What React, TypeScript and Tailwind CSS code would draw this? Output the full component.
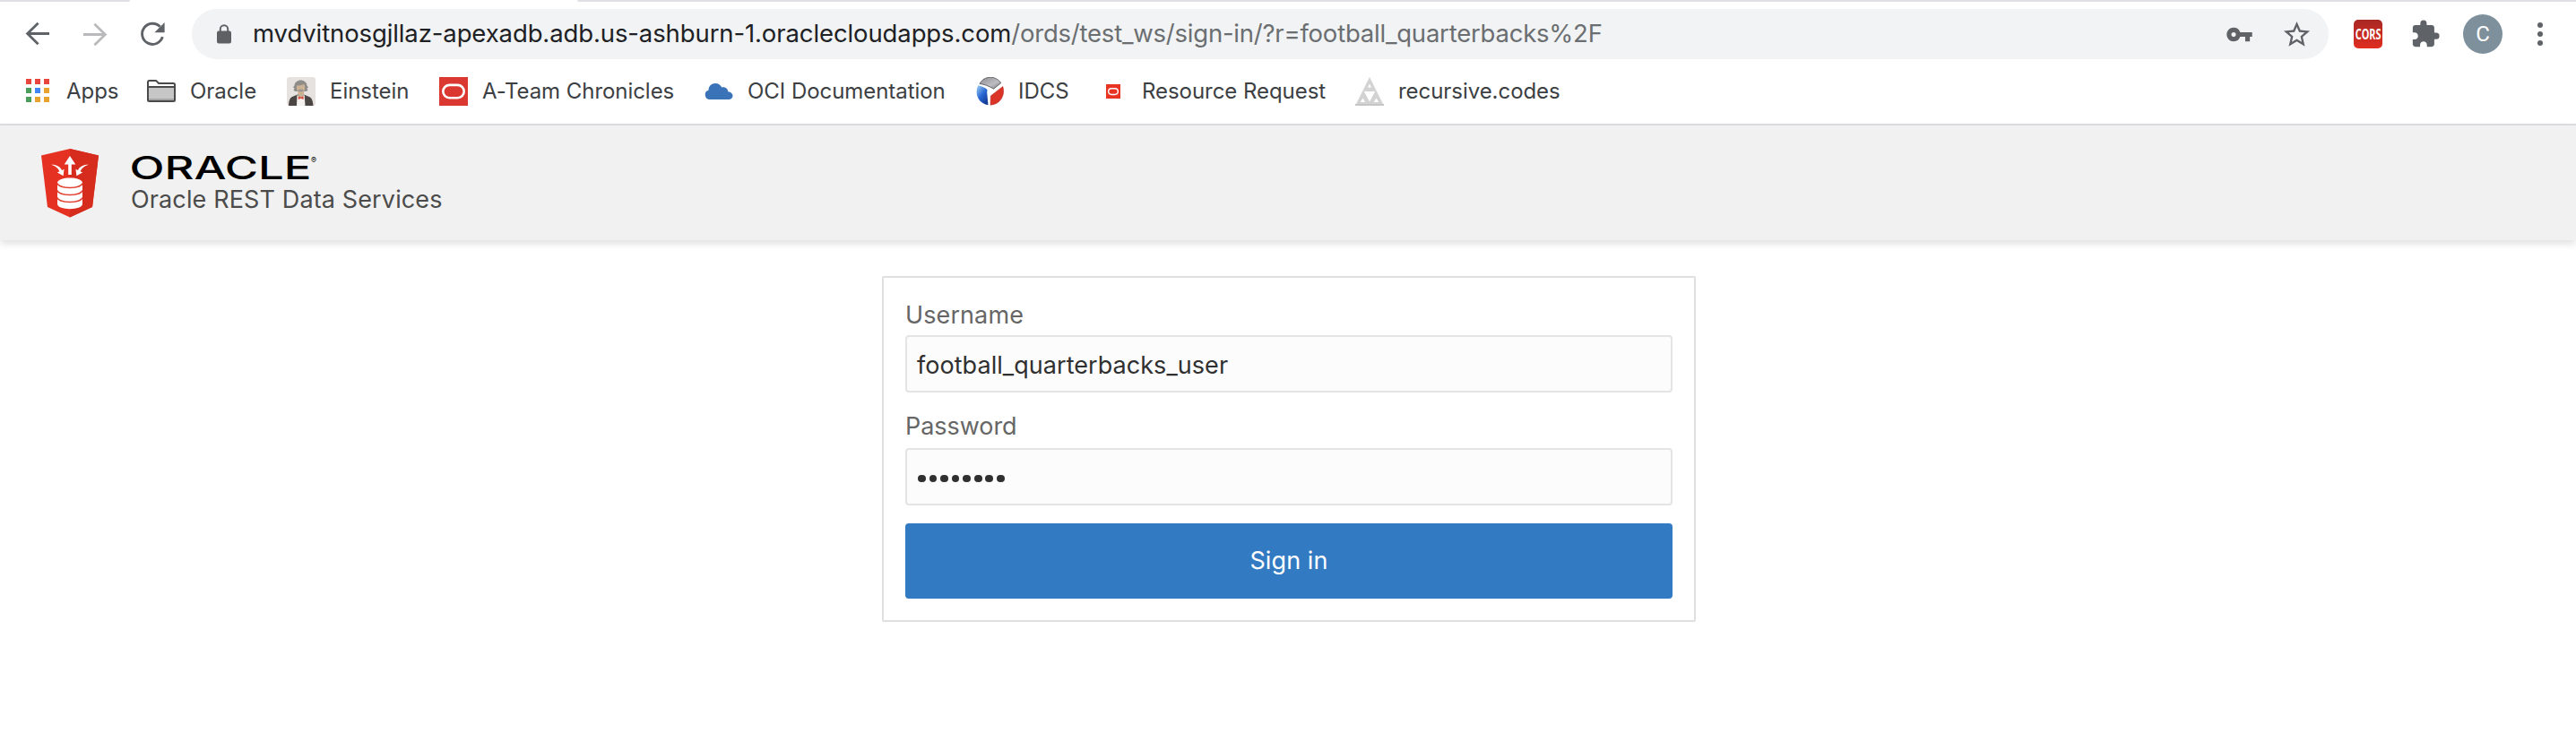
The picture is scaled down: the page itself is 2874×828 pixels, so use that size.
import type { ReactNode } from 'react';
import { MdExtension, MdStarBorder, MdVpnKey } from 'react-icons/md';

function BackIcon() {
  return (
    <svg width="28" height="28" viewBox="0 0 28 28" fill="none" stroke="currentColor" strokeWidth="2.8">
      <path d="M27 13.5H3M14.6 1.8L2.6 13.5l12 11.8" />
    </svg>
  );
}

function ReloadIcon() {
  return (
    <svg width="28" height="28" viewBox="0 0 28 28" fill="none">
      <path d="M25.3 17.2A11.6 11.6 0 1 1 22.6 5.8" stroke="currentColor" strokeWidth="2.9" />
      <path d="M27.6 1v11.2H16.4z" fill="currentColor" />
    </svg>
  );
}

function LockIcon() {
  return (
    <svg width="16" height="22" viewBox="0 0 16 22">
      <path d="M3.8 8.5V5.4a4.2 4.2 0 0 1 8.4 0v3.1" fill="none" stroke="#5f6368" strokeWidth="2" />
      <rect y="7.5" width="16" height="14" rx="2" fill="#5f6063" />
    </svg>
  );
}

function AppsIcon() {
  const dots = ['#e8453c', '#e8453c', '#e8453c', '#4a9d5b', '#4285f4', '#e8a32f', '#4a9d5b', '#e8a32f', '#e8a32f'];
  return (
    <svg width="32" height="32" viewBox="0 0 32 32">
      {dots.map((color, i) => (
        <rect key={i} x={3 + (i % 3) * 10} y={2 + Math.floor(i / 3) * 10} width="6" height="6" fill={color} />
      ))}
    </svg>
  );
}

function FolderIcon() {
  return (
    <svg width="32" height="32" viewBox="0 0 32 32">
      <path d="M1 26V5.5Q1 4 2.5 4h7q1 0 1.6.8L13 7h16.5Q31 7 31 8.5v17q0 1.500-1.500 1.500h-27Q1 27 1 26z" fill="#fff" stroke="#4a4a4a" strokeWidth="2" />
      <path d="M2 11h28v13H2z" fill="#c6c6c6" />
      <path d="M2 24h28v2H2z" fill="#a3a3a3" />
      <path d="M1 11h30" stroke="#4a4a4a" strokeWidth="2" />
    </svg>
  );
}

function EinsteinIcon() {
  return (
    <svg width="32" height="32" viewBox="0 0 32 32">
      <rect width="32" height="32" rx="3" fill="#e6e2df" />
      <path d="M2 32c.3-6 1.5-9 4-10l6-2.5h7l6 2.5c2.7 1 4 4 4.5 10z" fill="#4b4643" />
      <path d="M11.5 20l4.200 3 4-3 .8 12h-9.500z" fill="#f4f1ee" />
      <path d="M12.5 16h6.500v4.500l-3.300 2.500-3.200-2.500z" fill="#c9b093" />
      <path d="M7.5 15l1-2.500-1.500-1 1.500-2c0-3.500 3.500-6 7-6s7 2.500 7 6l1.500 2-1.500 1 1 2.500-2.500 1h-11z" fill="#8f8d8a" />
      <path d="M11 9.500c3 .5 6-1 8.500-1.500.9 3 .7 6-.2 8-1.700 3-5.700 3-7.300 0-.8-2-1.200-4-1-6.500z" fill="#cdb395" />
      <path d="M12.5 14.500c2-1.200 4.500-1.200 6.300 0l-.6 1.700h-5.200z" fill="#9a9691" />
      <path d="M12.8 21.500l2.900 1.300 2.900-1.300v3.500l-2.900-1.200-2.900 1.200z" fill="#dc4437" />
    </svg>
  );
}

function OracleTile() {
  return (
    <svg width="32" height="32" viewBox="0 0 32 32">
      <rect width="32" height="32" fill="#db3832" />
      <rect x="4.3" y="8.900" width="23.400" height="14.400" rx="7.200" fill="none" stroke="#fff" strokeWidth="2.600" />
    </svg>
  );
}

function CloudIcon() {
  return (
    <svg width="32" height="32" viewBox="0 0 32 32">
      <path d="M6 25a5.200 5.200 0 0 1-1.500-10.200C4.500 10 8 7 12 7c3.500 0 6 1.700 7.300 4.600C23 10.600 26 13 26.300 16.200c3.500.5 5.200 2.300 5.200 4.600 0 2.500-1.800 4.200-4.500 4.200z" fill="#3a73b8" />
    </svg>
  );
}

function IdcsIcon() {
  return (
    <svg width="32" height="32" viewBox="0 0 32 32">
      <defs>
        <linearGradient id="idcs-gray" x1="0" y1="0" x2="1" y2="1">
          <stop offset="0" stopColor="#8b8b8f" />
          <stop offset="0.6" stopColor="#bdbdc2" />
          <stop offset="1" stopColor="#77777b" />
        </linearGradient>
        <linearGradient id="idcs-blue" x1="0" y1="0" x2="0.7" y2="1">
          <stop offset="0" stopColor="#a3d2f4" />
          <stop offset="0.55" stopColor="#2866d2" />
          <stop offset="1" stopColor="#153b96" />
        </linearGradient>
      </defs>
      <path d="M5 7.500C10-2 23-2 28.800 6.600L20.500 13.200C15.500 10 10 8 5 7.500z" fill="url(#idcs-gray)" stroke="#4d4d50" strokeWidth="0.800" />
      <path d="M3.300 9.300C-1 18 3 29.500 14.500 31.200L13.200 17.500 13.500 14C10.500 11.500 7 10 3.300 9.300z" fill="url(#idcs-blue)" />
      <path d="M30.800 10.500C34 20 28 30.500 17 31.200L17.300 21z" fill="#dc3329" stroke="#a92c25" strokeWidth="0.500" />
    </svg>
  );
}

function SmallOracleTile() {
  return (
    <svg width="32" height="32" viewBox="0 0 32 32">
      <rect x="8" y="8" width="16" height="16" fill="#e93323" />
      <rect x="10.700" y="12.700" width="10.600" height="6.800" rx="3.400" fill="none" stroke="#fff" strokeWidth="1.400" />
    </svg>
  );
}

function SierpinskiIcon() {
  return (
    <svg width="32" height="32" viewBox="0 0 32 32">
      <path d="M16 0l16 32H0z" fill="#d3d3d3" />
      <path d="M9.800 16h12.400L16 27.500zM14 11.500l2-4 2 4zM5.800 28l2.700-4.500 2.700 4.500zM20.800 28l2.700-4.500 2.700 4.500z" fill="#fff" />
      <path d="M0 31h32" stroke="#c6c6c6" strokeWidth="2" />
    </svg>
  );
}

function OrdsLogo() {
  return (
    <svg width="66" height="78" viewBox="0 0 66 78">
      <path d="M33 1l32 7.500-7 57.500-25 11.500L8 66 1 8.500z" fill="#e53122" />
      <path d="M33 1l32 7.500-7 57.500-25 11.500z" fill="#d52c1e" />
      <g fill="#fff">
        <path d="M33 9l6.300 9.500h-4.500V30h-3.600V18.500h-4.500z" />
        <path d="M12 18.700c6-.3 10 2 12 6.200l2.500-1.200-.9 7.500-6.700-3.800 2.500-1.200c-1.500-3.500-4.400-6.100-9.400-7.500z" />
        <path d="M54 18.700c-6-.3-10 2-12 6.200l-2.500-1.200.9 7.500 6.700-3.800-2.500-1.200c1.500-3.500 4.400-6.100 9.400-7.500z" />
        <path d="M19 39c0-7.500 28-7.500 28 0v23.500c0 7.500-28 7.500-28 0z" />
      </g>
      <path d="M19 39.500c1.500 6.500 26.500 6.500 28 0M19 47.500c1.500 6.500 26.500 6.500 28 0M19 55.500c1.500 6.500 26.500 6.500 28 0" fill="none" stroke="#e0402f" strokeWidth="1.500" />
    </svg>
  );
}

function OracleWordmark() {
  return (
    <svg width="220" height="28" viewBox="-2 0 220 28" className="-ml-0.5 block overflow-visible font-[Inter]">
      <text x="-1.500" y="27" fontSize="35.500" fontWeight="500" textLength="203" lengthAdjust="spacingAndGlyphs">ORACLE</text>
      <text x="201" y="9" fontSize="9">®</text>
    </svg>
  );
}

type Bookmark = { label: string; icon: ReactNode; width: string };

const bookmarks: Bookmark[] = [
  { label: 'Apps', icon: <AppsIcon />, width: 'w-[138px]' },
  { label: 'Oracle', icon: <FolderIcon />, width: 'w-[156px]' },
  { label: 'Einstein', icon: <EinsteinIcon />, width: 'w-[170px]' },
  { label: 'A-Team Chronicles', icon: <OracleTile />, width: 'w-[296px]' },
  { label: 'OCI Documentation', icon: <CloudIcon />, width: 'w-[302px]' },
  { label: 'IDCS', icon: <IdcsIcon />, width: 'w-[138px]' },
  { label: 'Resource Request', icon: <SmallOracleTile />, width: 'w-[286px]' },
  { label: 'recursive.codes', icon: <SierpinskiIcon />, width: 'w-[240px]' },
];

function Toolbar() {
  return (
    <div className="flex h-16 items-center pt-2 pl-[10px] text-[#5f6368]">
      <button className="flex w-16 justify-center"><BackIcon /></button>
      <button className="flex w-16 rotate-180 justify-center text-[#bababc]"><BackIcon /></button>
      <button className="flex w-16 justify-center"><ReloadIcon /></button>

      <div className="ml-3 flex h-14 w-[2384px] items-center rounded-full bg-[#f1f3f4] pr-1 pl-7">
        <LockIcon />
        <div className="ml-6 text-[27.5px] leading-none whitespace-nowrap">
          <span className="tracking-[-0.11px] text-[#202124]">mvdvitnosgjllaz-apexadb.adb.us-ashburn-1.oraclecloudapps.com</span>
          <span className="tracking-[-0.22px] text-[#6b6e71]">/ords/test_ws/sign-in/?r=football_quarterbacks%2F</span>
        </div>
        <div className="ml-auto flex w-16 justify-center"><MdVpnKey size={31} /></div>
        <div className="flex w-16 justify-center"><MdStarBorder size={35} /></div>
      </div>

      <div className="ml-7 flex h-8 w-8 items-center justify-center rounded-[5px] bg-gradient-to-b from-[#a92823] to-[#e02d20]">
        <span className="scale-x-[0.68] font-['Open_Sans'] text-[16px] leading-none font-bold text-white">CORS</span>
      </div>
      <div className="ml-4 flex w-16 justify-center"><MdExtension size={34} /></div>
      <div className="ml-[10px] flex h-11 w-11 items-center justify-center rounded-full bg-[#7e909c] font-[Roboto] text-[24px] text-white">C</div>
      <div className="ml-[10px] flex w-16 flex-col items-center gap-1">
        <span className="h-1.5 w-1.5 rounded-full bg-[#5f6368]" />
        <span className="h-1.5 w-1.5 rounded-full bg-[#5f6368]" />
        <span className="h-1.5 w-1.5 rounded-full bg-[#5f6368]" />
      </div>
    </div>
  );
}

function BookmarksBar() {
  return (
    <div className="flex h-[74px] items-center border-b-2 border-[#dcdde1] pl-[26px] text-[24px] text-[#3c4043]">
      {bookmarks.map((b) => (
        <div key={b.label} className={`flex shrink-0 items-center gap-4 ${b.width}`}>
          {b.icon}
          <span className="leading-none tracking-[-0.05px] whitespace-nowrap">{b.label}</span>
        </div>
      ))}
    </div>
  );
}

function LoginForm() {
  return (
    <form className="mt-10 ml-[984px] flex h-[386px] w-[908px] flex-col rounded-[2px] border-2 border-[#dfdfdf] px-6 pt-[22px]">
      <label className="h-[42px] text-[27px] leading-[40px] tracking-[0.1px] text-[#666]">Username</label>
      <div className="flex h-16 items-center rounded-[4px] border-2 border-[#e4e4e4] bg-[#fcfcfc] px-[11px] pt-1 text-[27px] tracking-[0.05px] text-[#303030]">
        football_quarterbacks_user
      </div>
      <label className="mt-[18px] h-11 text-[27px] leading-[40px] tracking-[-0.05px] text-[#666]">Password</label>
      <div className="flex h-16 items-center gap-[3.900px] rounded-[4px] border-2 border-[#e4e4e4] bg-[#fcfcfc] px-3">
        {Array.from({ length: 8 }, (_, i) => (
          <span key={i} className="mt-1 h-[8.700px] w-[8.700px] rounded-full bg-[#303030]" />
        ))}
      </div>
      <button type="button" className="mt-5 h-[84px] rounded-[4px] bg-[#327ac2] pt-px text-[27px] tracking-[0.1px] text-white">
        Sign in
      </button>
    </form>
  );
}

export default function App() {
  return (
    <div className="h-[828px] w-[2874px] overflow-hidden bg-white font-[Inter,'Liberation_Sans',sans-serif]">
      {/* bottom edge of the tab strip, open under the active tab */}
      <div className="flex h-0.5 justify-between">
        <div className="w-[145px] rounded-br-[2px] bg-[#dfdfe5]" />
        <div className="w-[2230px] rounded-bl-[2px] bg-[#dfdfe5]" />
      </div>
      <Toolbar />
      <BookmarksBar />

      <header className="flex h-32 items-start bg-[#f1f1f1] pt-[25px] pl-[45px] shadow-[0_4px_8px_rgba(0,0,0,0.12)]">
        <OrdsLogo />
        <div className="ml-[35px] pt-2">
          <OracleWordmark />
          <div className="mt-1 text-[27px] leading-[36px] tracking-[0.13px] text-[#4b4b4b]">Oracle REST Data Services</div>
        </div>
      </header>

      <LoginForm />
    </div>
  );
}
